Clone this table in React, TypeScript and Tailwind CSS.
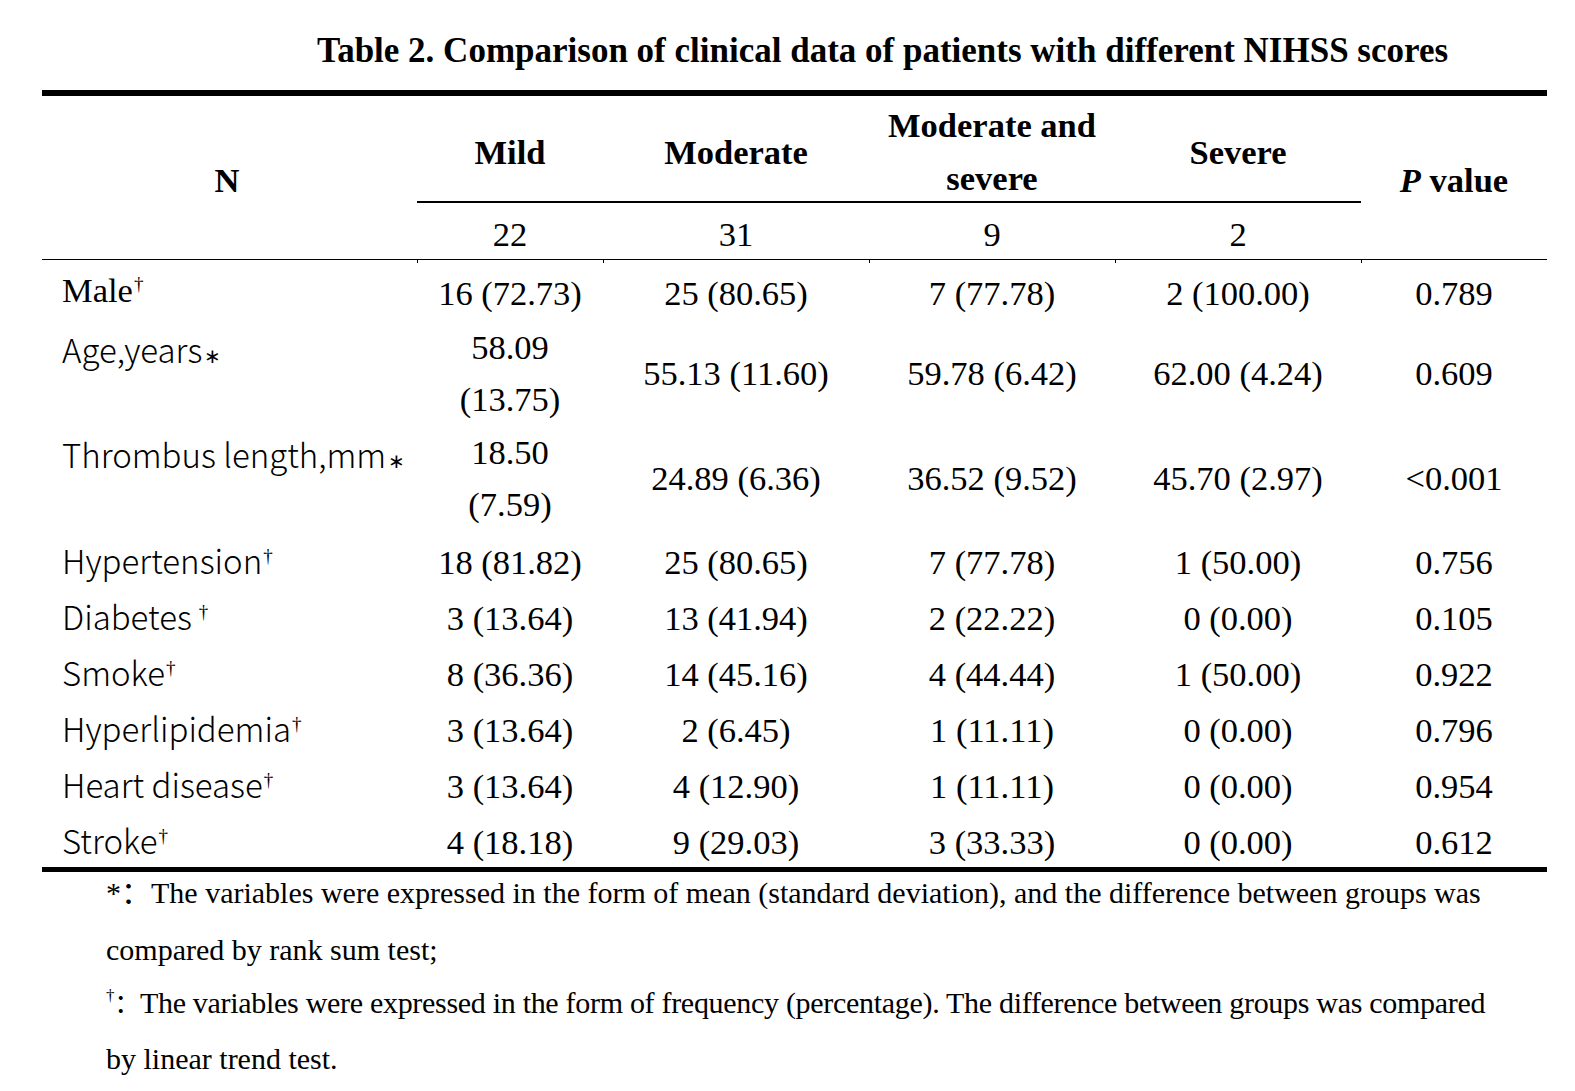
import React from "react";

const serif = "font-['Liberation_Serif','Times_New_Roman',serif]";
const cjk = "font-['Noto_Sans_CJK_SC',sans-serif]";
const cols = "grid grid-cols-[375px_186px_266px_246px_246px_186px]";

type Cell = string | [string, string];
type Row = { label: React.ReactNode; cells: Cell[] };

const Dag = ({ gap }: { gap?: boolean }) => (
  <span className={`${serif} text-[19px] font-normal leading-none align-[12px] ${gap ? "ml-[7px]" : "ml-[1px]"}`}>†</span>
);
const Star = () => <span className={`${serif} text-[20px] ml-[2px]`}>∗</span>;

const sans = "font-['Noto_Sans_CJK_SC','Noto_Sans',sans-serif] font-light text-[33px] relative top-[2px]";

const rows: Row[] = [
  { label: <span className={`${serif} text-[34.5px]`}>Male<Dag /></span>, cells: ["16 (72.73)", "25 (80.65)", "7 (77.78)", "2 (100.00)", "0.789"] },
  { label: <span className={sans}>Age,years<Star /></span>, cells: [["58.09", "(13.75)"], "55.13 (11.60)", "59.78 (6.42)", "62.00 (4.24)", "0.609"] },
  { label: <span className={sans}>Thrombus length,mm<Star /></span>, cells: [["18.50", "(7.59)"], "24.89 (6.36)", "36.52 (9.52)", "45.70 (2.97)", "<0.001"] },
  { label: <span className={sans}>Hypertension<Dag /></span>, cells: ["18 (81.82)", "25 (80.65)", "7 (77.78)", "1 (50.00)", "0.756"] },
  { label: <span className={sans}>Diabetes<Dag gap /></span>, cells: ["3 (13.64)", "13 (41.94)", "2 (22.22)", "0 (0.00)", "0.105"] },
  { label: <span className={sans}>Smoke<Dag /></span>, cells: ["8 (36.36)", "14 (45.16)", "4 (44.44)", "1 (50.00)", "0.922"] },
  { label: <span className={sans}>Hyperlipidemia<Dag /></span>, cells: ["3 (13.64)", "2 (6.45)", "1 (11.11)", "0 (0.00)", "0.796"] },
  { label: <span className={sans}>Heart disease<Dag /></span>, cells: ["3 (13.64)", "4 (12.90)", "1 (11.11)", "0 (0.00)", "0.954"] },
  { label: <span className={sans}>Stroke<Dag /></span>, cells: ["4 (18.18)", "9 (29.03)", "3 (33.33)", "0 (0.00)", "0.612"] },
];

function BodyRow({ row, className }: { row: Row; className: string }) {
  return (
    <div className={`${cols} ${className} text-black`}>
      <div className="pl-[20px] whitespace-nowrap">{row.label}</div>
      {row.cells.map((c, i) =>
        Array.isArray(c) ? (
          <div key={i} className={`${serif} text-[34.5px] text-center`}>
            <div>{c[0]}</div>
            <div>{c[1]}</div>
          </div>
        ) : (
          <div key={i} className={`${serif} text-[34.5px] text-center flex items-center justify-center whitespace-nowrap`}>
            {c}
          </div>
        )
      )}
    </div>
  );
}

export default function App() {
  return (
    <div className="w-[1575px] h-[1091px] bg-white text-black overflow-hidden">
      <div className={`${serif} font-bold text-[35px] leading-[40px] pt-[31px] pl-[317px] whitespace-nowrap`}>
        Table 2. Comparison of clinical data of patients with different NIHSS scores
      </div>

      <div className="ml-[42px] w-[1505px] mt-[19px]">
        {/* header */}
        <div className={`border-t-[6px] border-b border-black ${cols} grid-rows-[107px_56px] ${serif} font-bold text-[34.5px]`}>
          <div className="row-span-2 flex items-center justify-center pt-[6px] pr-[5px]">N</div>
          <div className="border-b-2 border-black flex items-center justify-center pt-[6px] leading-[52px]">Mild</div>
          <div className="border-b-2 border-black flex items-center justify-center pt-[6px] leading-[52px]">Moderate</div>
          <div className="border-b-2 border-black flex flex-col items-center justify-center pt-[6px] leading-[53px] text-center">
            <span>Moderate and</span>
            <span>severe</span>
          </div>
          <div className="border-b-2 border-black flex items-center justify-center pt-[6px] leading-[52px]">Severe</div>
          <div className="row-span-2 col-start-6 row-start-1 flex items-center justify-center pt-[6px]">
            <span><i>P</i> value</span>
          </div>
          <div className="col-start-2 flex items-center justify-center pt-[8px] font-normal">22</div>
          <div className="flex items-center justify-center pt-[8px] font-normal">31</div>
          <div className="flex items-center justify-center pt-[8px] font-normal">9</div>
          <div className="flex items-center justify-center pt-[8px] font-normal">2</div>
        </div>

        {/* tick marks under header rule */}
        <div className={`${cols} h-[3px]`}>
          <div />
          <div className="border-l border-black" />
          <div className="border-l border-black" />
          <div className="border-l border-black" />
          <div className="border-l border-black" />
          <div className="border-l border-black" />
        </div>

        <div className="pt-[1px]">
          <BodyRow row={rows[0]} className="leading-[52px]" />
          <BodyRow row={rows[1]} className="leading-[52px] mt-[-1px]" />
          <BodyRow row={rows[2]} className="leading-[52px] mt-[1px]" />
          {rows.slice(3).map((r, i) => (
            <BodyRow key={i} row={r} className="leading-[56px] h-[56px]" />
          ))}
        </div>
        <div className="h-[5px] bg-black mt-[1px]" />
      </div>

      <div className={`${serif} text-[30px] leading-[40px] pl-[106px] whitespace-nowrap`}>
        <div className="mt-[-2px]">*<span className={cjk}>：</span>The variables were expressed in the form of mean (standard deviation), and the difference between groups was</div>
        <div className="mt-[17px]">compared by rank sum test;</div>
        <div className="mt-[6px] tracking-[-0.3px]">
          <span className="text-[17px] align-[12px]">†</span>
          <span className={`${cjk} text-[26px]`}>：</span>The variables were expressed in the form of frequency (percentage). The difference between groups was compared
        </div>
        <div className="mt-[16px]">by linear trend test.</div>
      </div>
    </div>
  );
}
